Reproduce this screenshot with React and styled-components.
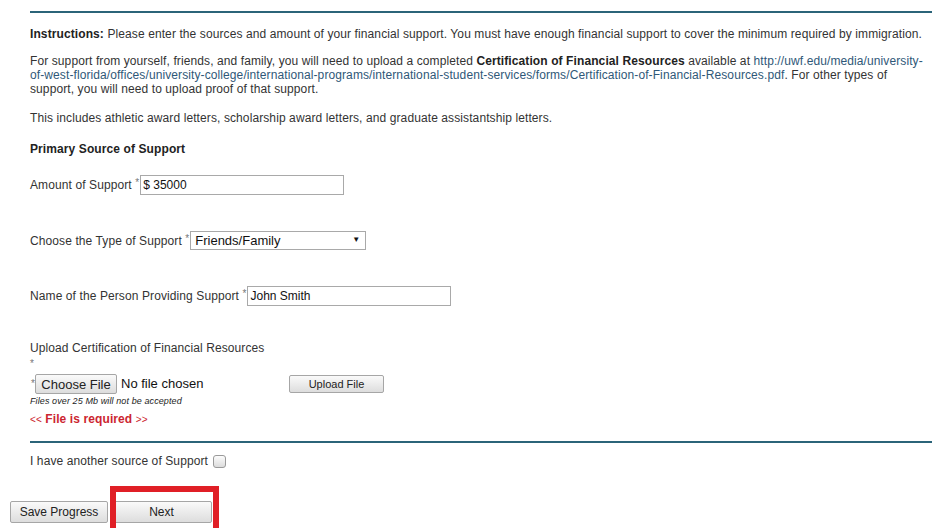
import styled, { createGlobalStyle } from "styled-components";

const GlobalStyle = createGlobalStyle`
    html, body {
        margin: 0;
        padding: 0;
        background: #ffffff;
        overflow: hidden;
    }
    body {
        font-family: "Liberation Sans", Arial, sans-serif;
        color: #333333;
    }
`;

export default function App(){
    return(
        <PageStyle>
            <GlobalStyle/>
            <SectionStyle>
                <Rule/>
                <Para $top={14}>
                    <b>Instructions:</b> Please enter the sources and amount of your financial support. You must have enough financial support to cover the minimum required by immigration.
                </Para>
                <Para $top={13}>
                    For support from yourself, friends, and family, you will need to upload a completed <b>Certification of Financial Resources</b> available at <LinkText>http://uwf.edu/media/university-of-west-florida/offices/university-college/international-programs/international-student-services/forms/Certification-of-Financial-Resources.pdf</LinkText>. For other types of support, you will need to upload proof of that support.
                </Para>
                <Para $top={15}>
                    This includes athletic award letters, scholarship award letters, and graduate assistantship letters.
                </Para>
                <Heading>Primary Source of Support</Heading>

                <FieldRow $top={19}>
                    <Label>Amount of Support <Req>*</Req></Label>
                    <TextInput $width={204} defaultValue="$ 35000"/>
                </FieldRow>

                <FieldRow $top={36}>
                    <Label>Choose the Type of Support <Req>*</Req></Label>
                    <SelectWrap>
                        <Select defaultValue="family">
                            <option value="family">Friends/Family</option>
                            <option value="self">Self</option>
                            <option value="sponsor">Sponsor</option>
                        </Select>
                        <Arrow>▼</Arrow>
                    </SelectWrap>
                </FieldRow>

                <FieldRow $top={36}>
                    <Label>Name of the Person Providing Support <Req>*</Req></Label>
                    <TextInput $width={204} defaultValue="John Smith"/>
                </FieldRow>

                <UploadLabel>Upload Certification of Financial Resources</UploadLabel>
                <StarLine>*</StarLine>
                <FileRow>
                    <Req>*</Req>
                    <FileControl>
                        <GrayButton $w={82} $h={20} $size={13}>Choose File</GrayButton>
                        <span>No file chosen</span>
                    </FileControl>
                    <GrayButton $w={95} $h={18} $size={11}>Upload File</GrayButton>
                </FileRow>
                <Hint>Files over 25 Mb will not be accepted</Hint>
                <Required><small>&lt;&lt;</small> File is required <small>&gt;&gt;</small></Required>

                <Rule $top={14}/>
                <CheckRow>
                    I have another source of Support
                    <Check type="checkbox"/>
                </CheckRow>
            </SectionStyle>

            <ButtonBar>
                <GrayButton $w={98} $h={22} $size={12}>Save Progress</GrayButton>
                <Highlight>
                    <GrayButton $w={101} $h={22} $size={12}>Next</GrayButton>
                </Highlight>
            </ButtonBar>
        </PageStyle>
    );
}

const PageStyle = styled.div`
    padding-top: 11px;
    height: 528px;
    box-sizing: border-box;
    font-size: 12px;
    line-height: 14px;
    letter-spacing: 0.1px;
`;

const SectionStyle = styled.div`
    margin: 0 14px 0 30px;
`;

const Rule = styled.div`
    height: 2px;
    background: #2b6479;
    margin-top: ${p => p.$top || 0}px;
`;

const Para = styled.p`
    margin: ${p => p.$top}px 0 0;
    padding-right: 4px;
    b{
        color: #222222;
    }
`;

const LinkText = styled.span`
    color: #2f5878;
`;

const Heading = styled.div`
    margin-top: 17px;
    font-weight: bold;
    color: #222222;
`;

const FieldRow = styled.div`
    display: flex;
    align-items: center;
    margin-top: ${p => p.$top}px;
`;

const Label = styled.span`
    white-space: nowrap;
    margin-right: 1px;
`;

const Req = styled.sup`
    font-size: 10px;
    color: #777777;
    vertical-align: top;
    line-height: 10px;
`;

const TextInput = styled.input`
    width: ${p => p.$width}px;
    height: 20px;
    box-sizing: border-box;
    border: 1px solid #a9a9a9;
    padding: 0 2px;
    font-family: "Liberation Sans", Arial, sans-serif;
    font-size: 12px;
    color: #111111;
    outline: none;
`;

const SelectWrap = styled.div`
    position: relative;
    width: 176px;
    height: 19px;
`;

const Select = styled.select`
    appearance: none;
    width: 100%;
    height: 100%;
    box-sizing: border-box;
    border: 1px solid #a9a9a9;
    border-radius: 0;
    background: #ffffff;
    padding: 0 4px;
    font-family: "Liberation Sans", Arial, sans-serif;
    font-size: 13px;
    color: #111111;
    outline: none;
`;

const Arrow = styled.span`
    position: absolute;
    right: 6px;
    top: 3px;
    font-size: 8px;
    line-height: 12px;
    color: #111111;
    pointer-events: none;
`;

const UploadLabel = styled.div`
    margin-top: 35px;
`;

const StarLine = styled.div`
    margin-top: 3px;
    font-size: 10px;
    line-height: 12px;
    color: #777777;
`;

const FileRow = styled.div`
    display: flex;
    align-items: center;
    margin-top: 4px;
    margin-left: 1px;
`;

const FileControl = styled.div`
    width: 254px;
    display: flex;
    align-items: center;
    gap: 4px;
    font-size: 13px;
    color: #111111;
    letter-spacing: 0;
`;

const GrayButton = styled.button`
    width: ${p => p.$w}px;
    height: ${p => p.$h}px;
    box-sizing: border-box;
    padding: 0;
    flex-shrink: 0;
    font-family: "Liberation Sans", Arial, sans-serif;
    font-size: ${p => p.$size}px;
    color: #222222;
    background: linear-gradient(#fafafa, #dddddd);
    border: 1px solid #a6a6a6;
    border-radius: 2px;
`;

const Hint = styled.div`
    margin-top: 2px;
    font-size: 9px;
    line-height: 11px;
    font-style: italic;
    color: #222222;
`;

const Required = styled.div`
    margin-top: 5px;
    color: #cc2530;
    font-weight: bold;
    small{
        font-size: 10px;
        font-weight: normal;
    }
`;

const CheckRow = styled.div`
    display: flex;
    align-items: center;
    margin-top: 11px;
`;

const Check = styled.input`
    appearance: none;
    width: 13px;
    height: 13px;
    margin: 0 0 0 5px;
    border: 1px solid #9a9a9a;
    border-radius: 3px;
    background: linear-gradient(#fcfcfc, #dcdcdc);
`;

const ButtonBar = styled.div`
    display: flex;
    gap: 3px;
    margin-top: 33px;
    padding-left: 10px;
`;

const Highlight = styled.div`
    position: relative;
    display: flex;
    &::after{
        content: "";
        position: absolute;
        left: -1px;
        top: -15px;
        width: 109px;
        height: 60px;
        box-sizing: border-box;
        border: 6px solid #e01f26;
    }
`;
